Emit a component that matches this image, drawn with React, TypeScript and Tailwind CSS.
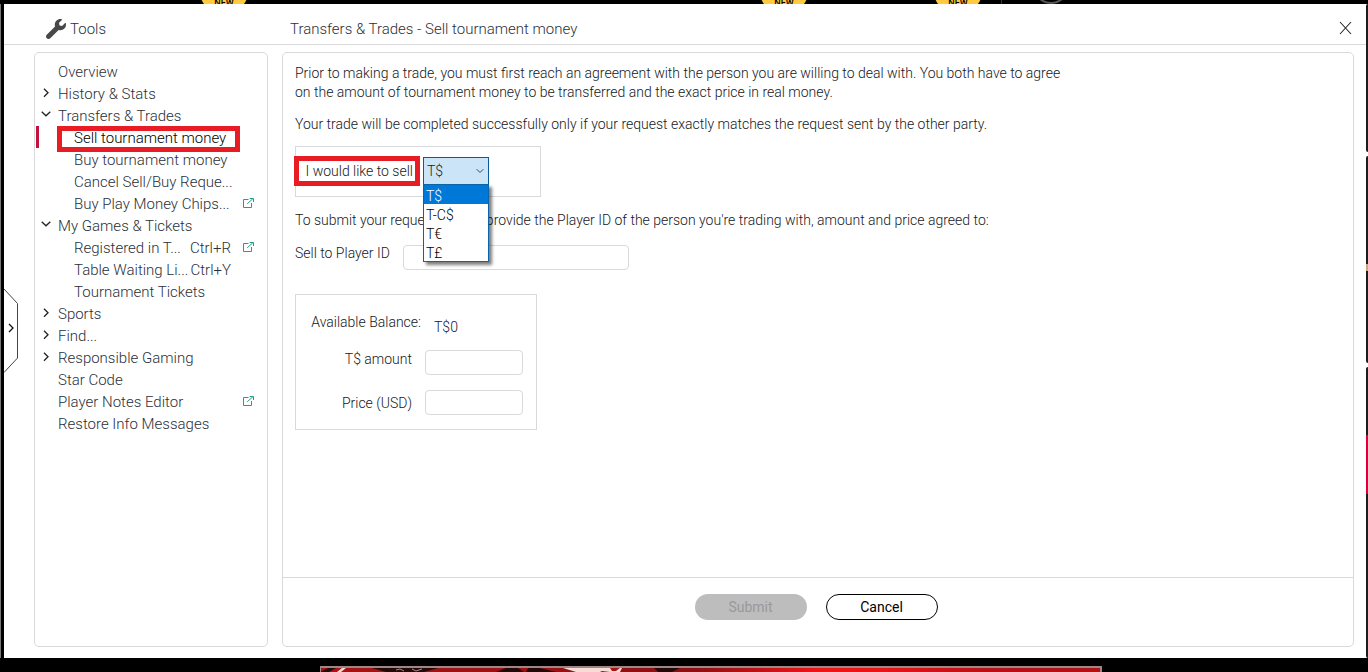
import React, { useState } from "react";
import { ChevronDown } from "lucide-react";

type NavItem = {
  label: string;
  depth?: number;
  state?: "open" | "closed";
  shortcut?: string;
  external?: boolean;
  active?: boolean;
};

const navItems: NavItem[] = [
  { label: "Overview" },
  { label: "History & Stats", state: "closed" },
  { label: "Transfers & Trades", state: "open" },
  { label: "Sell tournament money", depth: 1, active: true },
  { label: "Buy tournament money", depth: 1 },
  { label: "Cancel Sell/Buy Reque...", depth: 1 },
  { label: "Buy Play Money Chips...", depth: 1, external: true },
  { label: "My Games & Tickets", state: "open" },
  { label: "Registered in T...", depth: 1, shortcut: "Ctrl+R", external: true },
  { label: "Table Waiting Li...", depth: 1, shortcut: "Ctrl+Y" },
  { label: "Tournament Tickets", depth: 1 },
  { label: "Sports", state: "closed" },
  { label: "Find...", state: "closed" },
  { label: "Responsible Gaming", state: "closed" },
  { label: "Star Code" },
  { label: "Player Notes Editor", external: true },
  { label: "Restore Info Messages" },
];

const currencies = ["T$", "T-C$", "T€", "T£"];

function ArrowIcon({ open }: { open: boolean }) {
  return (
    <svg width="10" height="10" viewBox="0 0 10 10" fill="none" stroke="#222" strokeWidth="1.3" aria-hidden="true">
      <path d={open ? "M0.7 1.7 5 5.8 9.3 1.7" : "M3 0.8 7 4.8 3 8.8"} />
    </svg>
  );
}

function ExternalIcon() {
  return (
    <svg width="11" height="10" viewBox="0 0 11 10" fill="none" stroke="#1fa087" strokeWidth="1" aria-hidden="true">
      <path d="M5.5 1.5H0.5V9.5H8.5V5" />
      <path d="M4.2 5.8 9.8 0.8M6.6 0.5H10.5V4" />
    </svg>
  );
}

function NavRow({ item }: { item: NavItem }) {
  return (
    <li className="relative flex h-[22px] items-center pr-3">
      {item.active && <span className="absolute -top-px left-px h-[22px] w-[3px] bg-[#c2113c]" />}
      {item.active && (
        <span className="pointer-events-none absolute -top-px left-[22px] h-[26px] w-[183px] border-5 border-[#e81c24]" />
      )}
      <span className="flex w-[23px] shrink-0 justify-center pr-px pb-[2px]">
        {item.state && <ArrowIcon open={item.state === "open"} />}
      </span>
      <a
        href="#"
        className={`flex min-w-0 flex-1 items-center pt-[2px] whitespace-nowrap ${item.depth ? "pl-4" : ""} ${
          item.active ? "text-black" : "text-[#2b3038]"
        }`}
      >
        <span>{item.label}</span>
        {item.shortcut && <span className="ml-auto pr-3">{item.shortcut}</span>}
      </a>
      <span className="w-3 shrink-0 pb-[2px]">{item.external && <ExternalIcon />}</span>
    </li>
  );
}

function CurrencySelect({ value, onChange }: { value: string; onChange: (v: string) => void }) {
  return (
    <div className="relative w-[66px]">
      <select
        id="currency"
        value={value}
        onChange={(e) => onChange(e.target.value)}
        className="block h-7 w-full appearance-none border border-[#0b5a9a] bg-[#cce4f7] pl-[3px] outline-none"
      >
        {currencies.map((c) => (
          <option key={c}>{c}</option>
        ))}
      </select>
      <ChevronDown size={12} strokeWidth={2} className="pointer-events-none absolute top-2 right-[3px] text-[#3c4650]" />
      <ul
        role="listbox"
        aria-label="Currency"
        className="absolute top-[27px] left-0 z-10 w-full border border-[#0b64a8] bg-white shadow-[3px_3px_3px_rgba(0,0,0,0.5)]"
      >
        {currencies.map((c) => (
          <li
            key={c}
            role="option"
            aria-selected={c === value}
            onClick={() => onChange(c)}
            className={`h-[19px] pl-[2px] leading-[22px] ${c === value ? "bg-[#0078d7] text-white" : "text-black"}`}
          >
            {c}
          </li>
        ))}
      </ul>
    </div>
  );
}

function NewBadge() {
  return (
    <span className="flex h-10 w-12 items-end justify-center rounded-full bg-[#ffca3f] pb-1 font-[Roboto] text-[9px] leading-none font-medium text-black">
      NEW
    </span>
  );
}

function TopStrip() {
  return (
    <div className="relative h-1 shrink-0 overflow-hidden bg-black">
      <span className="absolute -bottom-2 left-[200px]"><NewBadge /></span>
      <span className="absolute -bottom-2 left-[760px]"><NewBadge /></span>
      <span className="absolute -bottom-2 left-[934px]"><NewBadge /></span>
      <span className="absolute left-[1001px] h-1 w-px bg-[#333]" />
      <span className="absolute bottom-0 left-[1033px] size-9 rounded-full border-2 border-[#555]" />
    </div>
  );
}

function BottomBanner() {
  return (
    <div className="flex h-[14px] shrink-0 items-end bg-black pl-80">
      <svg className="h-[6px] w-[782px]" viewBox="0 0 782 6" preserveAspectRatio="none" aria-hidden="true">
        <defs>
          <linearGradient id="felt">
            <stop offset="0" stopColor="#a81414" />
            <stop offset="0.48" stopColor="#8c0f12" />
            <stop offset="0.64" stopColor="#f01418" />
            <stop offset="0.72" stopColor="#e81418" />
            <stop offset="0.85" stopColor="#b81016" />
            <stop offset="1" stopColor="#b01016" />
          </linearGradient>
        </defs>
        <rect width="782" height="6" fill="url(#felt)" />
        <path d="M0 6 8 2H16L9 6ZM52 2H118L104 6H66ZM186 2H198L204 6H176ZM208 2H220L236 6H206ZM334 2H360L352 6H338Z" fill="#240808" />
        <path d="M76 4 80 3 84 5M92 3 96 5 102 3" stroke="#a88" fill="none" />
        <path d="M17 6 22 2H26L21 6ZM243 2H302L300 6H290L282 5 280 6H256Z" fill="#f7dcd8" />
        <path d="M290 2H300L296 5H292Z" fill="#a81414" />
        <path d="M0 0H782V6H780V2H1V6H0Z" fill="#a08585" />
      </svg>
    </div>
  );
}

const inputClass = "h-[25px] rounded border border-[#d9d9dc] bg-white px-2 outline-none";

export default function App() {
  const [currency, setCurrency] = useState("T$");

  return (
    <div className="flex min-h-screen flex-col bg-black font-[Roboto,sans-serif] text-sm font-light text-[#15181c]">
      <TopStrip />
      <div className="flex flex-1">
        <div className="w-1 shrink-0 border-l border-[#777] bg-black" />

        <section className="relative flex min-w-0 flex-1 flex-col bg-white">
          <header className="flex h-[41px] shrink-0 items-center border-b border-[#d9d9dc] pt-[11px] pr-[14px] text-[15px] text-[#2b3038]">
            <div className="flex w-[286px] shrink-0 items-center gap-1 pl-[42px]">
              <svg width="20" height="20" viewBox="0 0 512 512" fill="#484848" aria-hidden="true">
                <path d="M507.700 109.100c-2.200-9-13.500-12.100-20.100-5.500l-74.400 74.400-67.900-11.300L334 98.900l74.400-74.400c6.600-6.600 3.400-17.900-5.700-20.200-47.400-11.700-99.600.900-136.600 37.900-39.600 39.600-50.500 97.100-34.100 147.200L18.700 402.800c-25 25-25 65.500 0 90.500s65.500 25 90.500 0l213.200-213.200c50.100 16.700 107.500 5.700 147.400-34.200 37.100-37.100 49.700-89.300 37.900-136.800z" />
              </svg>
              <span>Tools</span>
            </div>
            <h1>Transfers &amp; Trades - Sell tournament money</h1>
            <button type="button" aria-label="Close" className="ml-auto flex items-center pb-1">
              <svg width="13" height="14" viewBox="0 0 13 14" stroke="#222" strokeWidth="1.1" aria-hidden="true">
                <path d="M1 1 12 13M12 1 1 13" />
              </svg>
            </button>
          </header>

          <div className="flex flex-1 gap-[14px] pt-[7px] pr-3 pb-[11px] pl-[30px]">
            <nav className="w-[234px] shrink-0 rounded-[5px] border border-[#d9d9dc] pt-2 text-[15px]">
              <ul>
                {navItems.map((item) => (
                  <NavRow key={item.label} item={item} />
                ))}
              </ul>
            </nav>

            <form
              className="flex min-w-0 flex-1 flex-col rounded-[5px] border border-[#d9d9dc]"
              onSubmit={(e) => e.preventDefault()}
            >
              <div className="flex-1 px-3 pt-[11px] leading-[19px]">
                <p className="max-w-[780px]">
                  Prior to making a trade, you must first reach an agreement with the person you are willing to deal
                  with. You both have to agree on the amount of tournament money to be transferred and the exact price
                  in real money.
                </p>
                <p className="mt-[13px]">
                  Your trade will be completed successfully only if your request exactly matches the request sent by the
                  other party.
                </p>

                <div className="mt-3 flex h-[51px] w-[246px] items-start border border-[#d9d9dc] pt-[9px]">
                  <label
                    htmlFor="currency"
                    className="-ml-[2px] flex h-[30px] w-[126px] shrink-0 items-center justify-end border-5 border-[#e81c24] pr-[2px] whitespace-nowrap"
                  >
                    I would like to sell
                  </label>
                  <div className="ml-[3px] pt-px">
                    <CurrencySelect value={currency} onChange={setCurrency} />
                  </div>
                </div>

                <p className="mt-[14px]">
                  To submit your request, please provide the Player ID of the person you're trading with, amount and
                  price agreed to:
                </p>

                <div className="mt-[15px] flex items-start">
                  <label htmlFor="player" className="-mt-px w-[108px] shrink-0">
                    Sell to Player ID
                  </label>
                  <input id="player" type="text" className={`${inputClass} w-[226px]`} />
                </div>

                <div className="mt-6 flex w-[242px] flex-col border border-[#d9d9dc] pt-[18px] pr-[13px] pb-[14px]">
                  <div className="flex h-[37px] items-start">
                    <span className="w-[125px] shrink-0 text-right">Available Balance:</span>
                    <output className="pt-[5px] pl-[13px]">T$0</output>
                  </div>
                  <div className="flex h-10 items-start">
                    <label htmlFor="amount" className="w-[129px] shrink-0 pr-[13px] text-right">
                      T$ amount
                    </label>
                    <input id="amount" type="text" className={`${inputClass} w-[98px]`} />
                  </div>
                  <div className="flex items-center">
                    <label htmlFor="price" className="w-[129px] shrink-0 pt-[2px] pr-[13px] text-right">
                      Price (USD)
                    </label>
                    <input id="price" type="text" className={`${inputClass} w-[98px]`} />
                  </div>
                </div>
              </div>

              <footer className="flex h-[69px] items-start justify-center gap-[19px] border-t border-[#d9d9dc] pt-4 pr-1 font-normal">
                <button type="submit" disabled className="h-[26px] w-28 rounded-full bg-[#bdbdbd] text-[#999]">
                  Submit
                </button>
                <button type="button" className="h-[26px] w-28 rounded-full border border-black bg-white text-black">
                  Cancel
                </button>
              </footer>
            </form>
          </div>

          <button type="button" aria-label="Expand panel" className="absolute top-[284px] left-0 h-[86px] w-[15px]">
            <svg width="15" height="86" viewBox="0 0 15 86" fill="none" aria-hidden="true">
              <path d="M0 1 13.500 15.500V70L0 84.500" stroke="#444" />
              <path d="M5 36 9 40 5 44" stroke="#111" strokeWidth="1.3" />
            </svg>
          </button>
        </section>

        <div className="flex w-[2px] shrink-0 flex-col gap-1 bg-white">
          <div className="h-[148px] rounded-l-sm bg-[#1c1c1c]" />
          <div className="h-[207px] rounded-l-sm bg-[#1c1c1c] pt-[108px]">
            <div className="h-[7px] bg-[#c9a77c]" />
          </div>
          <div className="flex-1 rounded-l-sm bg-[#1c1c1c] pt-[68px]">
            <div className="h-[59px] bg-[#d8003c]" />
          </div>
        </div>
      </div>
      <BottomBanner />
    </div>
  );
}
